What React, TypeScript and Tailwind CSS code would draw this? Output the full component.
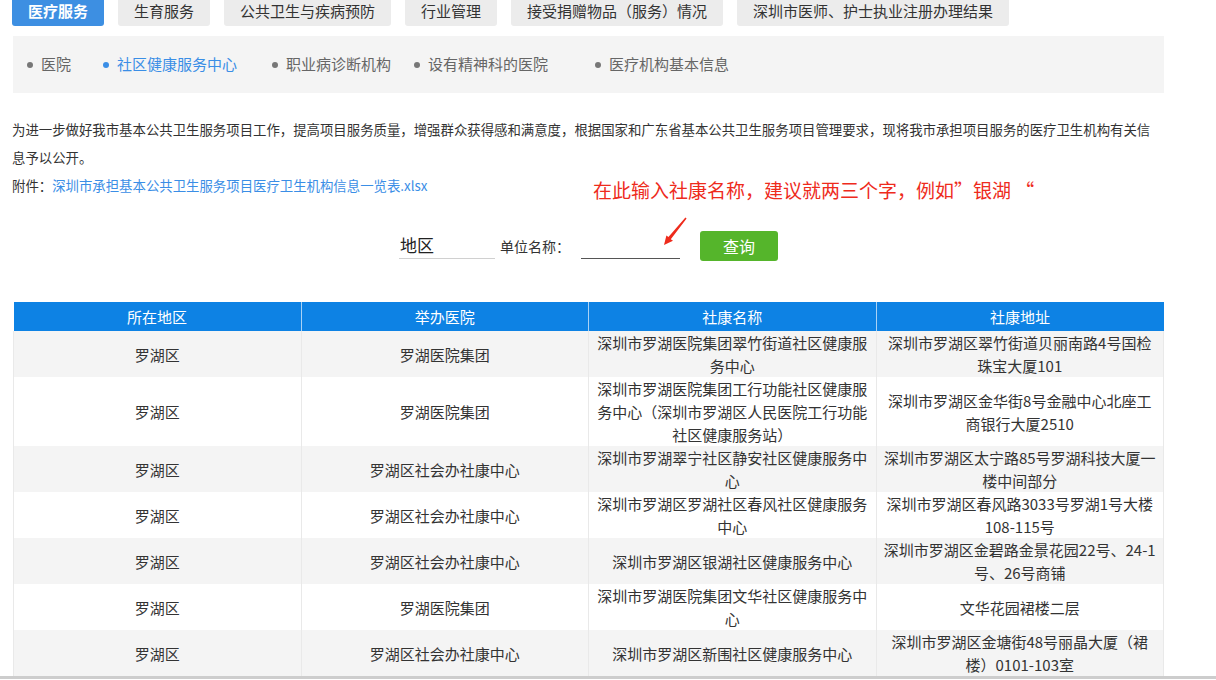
import React from 'react';

const FONT = { fontFamily: '"Noto Sans CJK SC", "Noto Sans", sans-serif' };

const tabs = ['医疗服务', '生育服务', '公共卫生与疾病预防', '行业管理', '接受捐赠物品（服务）情况', '深圳市医师、护士执业注册办理结果'];

// sub menu items, widths taken from the page so the spacing lines up
const subItems = [
  { label: '医院', w: 'w-[76px]' },
  { label: '社区健康服务中心', w: 'w-[169px]', active: true },
  { label: '职业病诊断机构', w: 'w-[142px]' },
  { label: '设有精神科的医院', w: 'w-[181px]' },
  { label: '医疗机构基本信息', w: 'w-[160px]' },
];

const headers = ['所在地区', '举办医院', '社康名称', '社康地址'];

const rows: string[][] = [
  ['罗湖区', '罗湖医院集团', '深圳市罗湖医院集团翠竹街道社区健康服\n务中心', '深圳市罗湖区翠竹街道贝丽南路4号国检\n珠宝大厦101'],
  ['罗湖区', '罗湖医院集团', '深圳市罗湖医院集团工行功能社区健康服\n务中心（深圳市罗湖区人民医院工行功能\n社区健康服务站）', '深圳市罗湖区金华街8号金融中心北座工\n商银行大厦2510'],
  ['罗湖区', '罗湖区社会办社康中心', '深圳市罗湖翠宁社区静安社区健康服务中\n心', '深圳市罗湖区太宁路85号罗湖科技大厦一\n楼中间部分'],
  ['罗湖区', '罗湖区社会办社康中心', '深圳市罗湖区罗湖社区春风社区健康服务\n中心', '深圳市罗湖区春风路3033号罗湖1号大楼\n108-115号'],
  ['罗湖区', '罗湖区社会办社康中心', '深圳市罗湖区银湖社区健康服务中心', '深圳市罗湖区金碧路金景花园22号、24-1\n号、26号商铺'],
  ['罗湖区', '罗湖医院集团', '深圳市罗湖医院集团文华社区健康服务中\n心', '文华花园裙楼二层'],
  ['罗湖区', '罗湖区社会办社康中心', '深圳市罗湖区新围社区健康服务中心', '深圳市罗湖区金塘街48号丽晶大厦（裙\n楼）0101-103室'],
];

const Arrow = () => (
  <svg width="30" height="34" viewBox="0 0 30 34" className="absolute left-[660px] top-[215px]">
    <polygon
      points="26.6,3.4 25.4,2.6 8.4,21.9 6.4,20.4 4,30 13,25.8 10.8,24.2"
      fill="#ee2b1c"
    />
  </svg>
);

const App: React.FC = () => {
  return (
    <div className="relative w-[1216px] h-[680px] overflow-hidden bg-white text-[#333]" style={FONT}>
      <div className="ml-[13px] w-[1151px]">
        {/* Top tabs */}
        <div className="flex gap-[14px] -ml-[1px]">
          {tabs.map((t, i) => (
            <div
              key={t}
              className={`h-[26px] px-4 rounded-b-[3px] text-[15px] leading-[22px] whitespace-nowrap ${
                i === 0 ? 'bg-[#3d8fe2] text-white font-bold' : 'bg-[#ececec] text-[#333]'
              }`}
            >
              {t}
            </div>
          ))}
        </div>

        {/* Sub menu */}
        <div className="mt-[10px] h-[57px] bg-[#f4f4f4] flex items-center pl-[14px]">
          {subItems.map((s) => (
            <div
              key={s.label}
              className={`${s.w} flex items-center text-[15px] whitespace-nowrap ${s.active ? 'text-[#3a8ee6]' : 'text-[#666]'}`}
            >
              <span className={`w-[6px] h-[6px] rounded-full mr-[8px] ${s.active ? 'bg-[#3a8ee6]' : 'bg-[#777]'}`} />
              {s.label}
            </div>
          ))}
        </div>

        {/* Intro text */}
        <div className="mt-[22px] -ml-[1px] text-[13.4px] leading-[28px] text-[#333]">
          <p className="whitespace-pre-line">
            {'为进一步做好我市基本公共卫生服务项目工作，提高项目服务质量，增强群众获得感和满意度，根据国家和广东省基本公共卫生服务项目管理要求，现将我市承担项目服务的医疗卫生机构有关信\n息予以公开。'}
          </p>
          <p>
            附件：<span className="text-[#3a8ee6]">深圳市承担基本公共卫生服务项目医疗卫生机构信息一览表.xlsx</span>
          </p>
        </div>

        {/* Search */}
        <div className="mt-[32px] h-[30px] flex items-center justify-center">
          <div className="w-[96px] h-[26px] border-b border-[#d0d0d0] pl-[1px] text-[17px] leading-[24px] text-[#222]">地区</div>
          <span className="ml-[5px] text-[14px] text-[#333]">单位名称：</span>
          <div className="ml-[11px] w-[99px] h-[26px] border-b-[1.5px] border-[#555] mt-[-1px]" />
          <button className="ml-[20px] w-[78px] h-[30px] rounded-[3px] bg-[#55b52b] text-white text-[16px]">查询</button>
        </div>

        {/* Table */}
        <table className="mt-[41px] w-[1151px] table-fixed border-collapse">
          <thead>
            <tr className="bg-[#0d82e4] text-white h-[29px]">
              {headers.map((h, i) => (
                <th
                  key={h}
                  className={`font-normal text-[15px] leading-[20px] ${i > 0 ? 'border-l border-[#a9d2f5]' : ''}`}
                >
                  {h}
                </th>
              ))}
            </tr>
          </thead>
          <tbody>
            {rows.map((r, ri) => (
              <tr key={ri} className={ri % 2 === 0 ? 'bg-[#f4f4f4]' : 'bg-white'}>
                {r.map((c, ci) => (
                  <td
                    key={ci}
                    className="h-[46px] px-[2px] text-center align-middle text-[15px] leading-[23px] text-[#333] whitespace-pre border-l border-r border-[#e9e9e9]"
                  >
                    {c}
                  </td>
                ))}
              </tr>
            ))}
          </tbody>
        </table>
      </div>

      {/* bottom edge */}
      <div className="h-[3px] w-full bg-[#cdcdcd]" />

      {/* annotation */}
      <div className="absolute left-[593px] top-[177px] text-[19px] leading-[26px] text-[#ee2b1c] whitespace-nowrap">
        在此输入社康名称，建议就两三个字，例如”银湖 “
      </div>
      <Arrow />
    </div>
  );
};

export default App;
